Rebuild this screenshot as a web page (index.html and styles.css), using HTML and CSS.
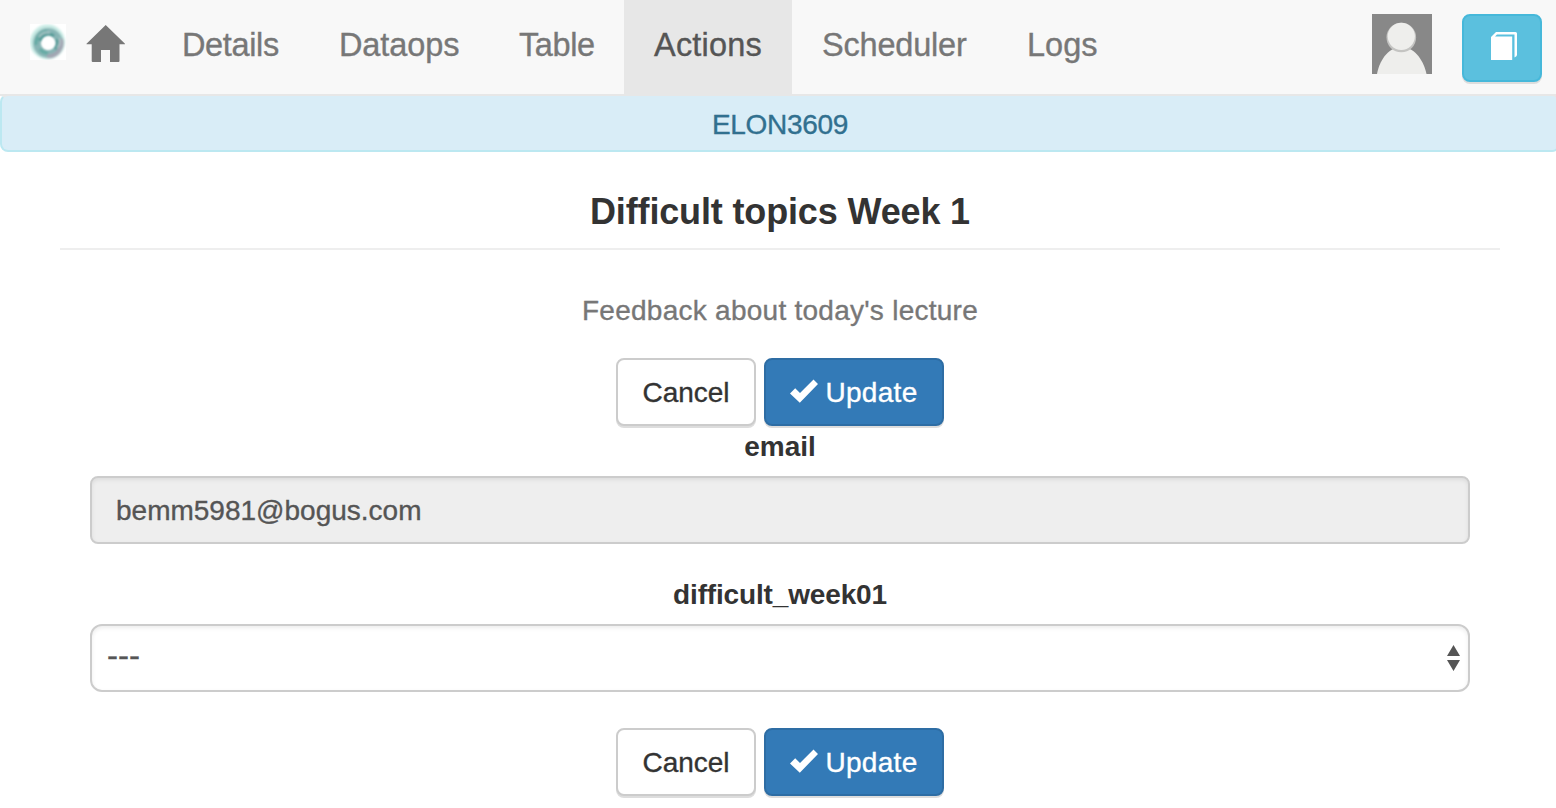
FILE: index.html
```html
<!DOCTYPE html>
<html lang="en">
<head>
<meta charset="utf-8">
<title>Difficult topics Week 1</title>
<link rel="stylesheet" href="styles.css">
</head>
<body>
<div class="page">
  <nav class="navbar">
    <a class="brand" href="#">
      <svg width="36" height="36" viewBox="0 0 36 36">
        <defs><filter id="soft"><feGaussianBlur stdDeviation="0.8"/></filter></defs>
        <rect width="36" height="36" fill="#fff"/>
        <g fill="none" filter="url(#soft)">
          <circle cx="17.500" cy="18" r="15.500" stroke="#c9ebe5" stroke-width="4"/>
          <circle cx="18" cy="19" r="11" stroke="#88b5b5" stroke-width="8"/>
          <path d="M17 32a13 13 0 0 0 14-17" stroke="#a3a5b2" stroke-width="4"/>
          <path d="M6 21A13 13 0 0 1 17 7M10 25a10 10 0 0 0 8 4" stroke="#62aaa3" stroke-width="3"/>
          <path d="M10 17a9 9 0 0 1 14-5M27 15a9 9 0 0 1-2 10" stroke="#4e9995" stroke-width="3"/>
          <path d="M9 13q4-6 11-4M29 14q2 6-2 10" stroke="#b9cccf" stroke-width="1.5"/>
        </g>
        <circle cx="18.500" cy="19" r="6" fill="#fff" filter="url(#soft)"/>
      </svg>
    </a>
    <a class="home" href="#">
      <svg width="40" height="38" viewBox="0 0 40 38"><path d="M19.700 0 39 18.800V19.300h-5.500V36q0 1-1 1H24V25h-9v12H6.700q-1 0-1-1V19.300H.5v-.5z" fill="#777"/></svg>
    </a>
    <a class="item details" href="#">Details</a>
    <a class="item dataops" href="#">Dataops</a>
    <a class="item table" href="#">Table</a>
    <a class="item actions active" href="#">Actions</a>
    <a class="item scheduler" href="#">Scheduler</a>
    <a class="item logs" href="#">Logs</a>
    <div class="tools">
      <svg width="60" height="60" viewBox="0 0 60 60">
        <rect width="60" height="60" fill="#888"/>
        <path d="M5 60C8 44 18 33 29.500 33S51 44 54.500 60z" fill="#eeeeec"/>
        <circle cx="29.300" cy="23.500" r="14.800" fill="#c4c4c2"/>
        <circle cx="29.300" cy="22.300" r="13.600" fill="#eeeeec"/>
      </svg>
      <button class="docs" aria-label="Documentation">
        <svg width="26" height="28" viewBox="0 0 26 28" fill="#fff"><path d="M0 28V5L5 0h19.500q1.500 0 1.500 1.500V23q0 1-2.500 2.500V2.500H6L4 4.500h17.200V28z"/></svg>
      </button>
    </div>
  </nav>
  <div class="course">ELON3609</div>
  <main class="content">
    <h1 class="title">Difficult topics Week 1</h1>
    <p class="lead">Feedback about today's lecture</p>
    <div class="buttons">
      <button class="btn cancel">Cancel</button>
      <button class="btn update"><svg width="28" height="24" viewBox="0 0 28 24"><path d="M0 14.500 5.200 9.300 10 14 23.500.5 28 5 9.800 23.700z" fill="#fff"/></svg><span>Update</span></button>
    </div>
    <div class="fields">
      <label class="label" for="email">email</label>
      <input class="control" id="email" value="bemm5981@bogus.com" readonly>
      <div class="label week">difficult_week01</div>
      <div class="control select"><span class="value">---</span><svg width="13" height="26" viewBox="0 0 13 26"><path d="M6.500 0 13 11H0zM0 15h13L6.500 26z" fill="#555"/></svg></div>
    </div>
    <div class="buttons bottom">
      <button class="btn cancel">Cancel</button>
      <button class="btn update"><svg width="28" height="24" viewBox="0 0 28 24"><path d="M0 14.500 5.200 9.300 10 14 23.500.5 28 5 9.800 23.700z" fill="#fff"/></svg><span>Update</span></button>
    </div>
  </main>
</div>
</body>
</html>
```
FILE: styles.css
```css
* { box-sizing: border-box; }
html { overflow: hidden; }
body { margin: 0; background: #fff; color: #333; font: 28px/40px "Liberation Sans", Arial, sans-serif; overflow: hidden; }
.page { width: 1560px; height: 808px; overflow: hidden; }
svg { display: block; flex: none; }
button, input { font: inherit; }
.item, .course, .lead, .btn, .control { -webkit-text-stroke: .35px currentColor; }
.navbar { display: flex; align-items: flex-start; height: 96px; background: #f8f8f8; border-bottom: 2px solid #e7e7e7; }
.brand { padding: 24px 0 0 30px; width: 86px; }
.home { padding: 25px 0 0; width: 66px; }
.item { height: 94px; padding-left: 30px; line-height: 91px; font-size: 32.5px; color: #777; text-decoration: none; white-space: nowrap; flex: none; }
.details { width: 157px; letter-spacing: -.35px; }
.dataops { width: 180px; letter-spacing: -.1px; }
.table { width: 135px; letter-spacing: -.4px; }
.actions { width: 168px; letter-spacing: .2px; }
.scheduler { width: 205px; letter-spacing: -.2px; }
.logs { width: 131px; }
.active { background: #e7e7e7; color: #555; }
.tools { display: flex; gap: 30px; margin-left: auto; padding: 14px 18px 0 0; }
.docs { display: flex; align-items: flex-start; justify-content: center; width: 80px; height: 68px; padding: 16px 0 0 3px; border: 2px solid #46b8da; border-radius: 8px; background: #5bc0de; box-shadow: 0 2px 0 #ddd; }
.course { height: 58px; margin-top: -2px; border: 2px solid #bce8f1; border-top-color: #e7e7e7; border-radius: 8px; background: #d9edf7; color: #31708f; text-align: center; line-height: 58px; letter-spacing: -.3px; }
.content { padding: 38px 60px 0; text-align: center; }
.title { height: 60px; margin: 0; border-bottom: 2px solid #eee; font-size: 36px; line-height: 44px; letter-spacing: -.15px; }
.lead { margin: 41px 0 27px; color: #777; letter-spacing: .26px; }
.buttons { display: flex; justify-content: center; gap: 8px; }
.btn { display: flex; align-items: center; justify-content: center; height: 68px; padding: 2px 0 0; border: 2px solid #ccc; border-radius: 8px; background: #fff; color: #333; box-shadow: 0 2px 0 #ddd; }
.cancel { width: 140px; }
.update { width: 180px; gap: 7px; border-color: #2e6da4; background: #337ab7; color: #fff; letter-spacing: .3px; }
.update svg { margin-top: -4px; }
.fields { padding: 0 30px; }
.label { display: block; height: 50px; font-weight: bold; line-height: 42px; }
.control { display: block; width: 100%; height: 68px; padding: 2px 24px 0; border: 2px solid #ccc; border-radius: 8px; background: #eee; color: #555; box-shadow: inset 0 2px 4px rgba(0,0,0,.075); outline: 0; }
.week { height: 80px; padding-top: 30px; letter-spacing: -.15px; }
.select { display: flex; align-items: center; justify-content: space-between; padding: 0 8px 0 15px; background: #fff; border-radius: 12px; }
.value { font-size: 33px; margin-top: -5px; }
.bottom { margin-top: 36px; }
```
